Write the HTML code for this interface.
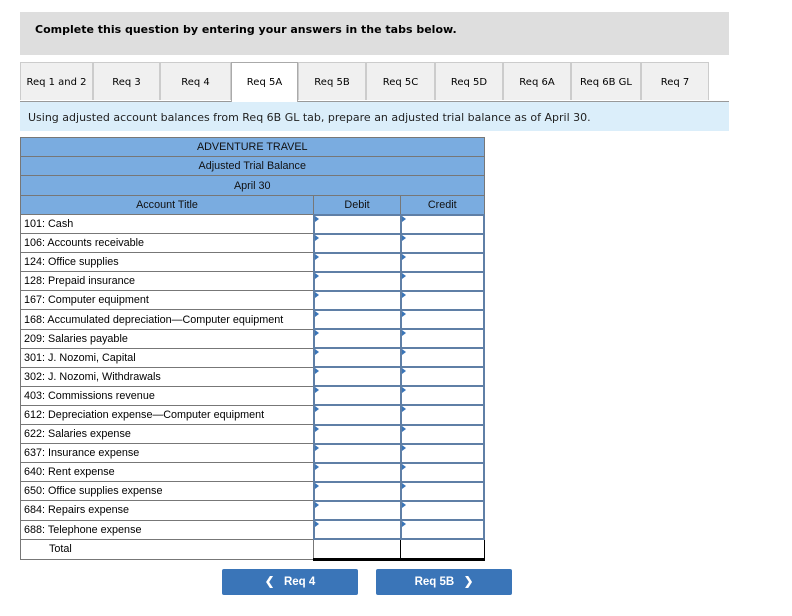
<!DOCTYPE html>
<html><head><style>
body{margin:0;width:792px;height:616px;background:#fff;font-family:"Liberation Sans",Verdana,sans-serif;position:relative;overflow:hidden}
.top{position:absolute;left:20px;top:12px;width:709px;height:43px;background:#dedede}
.top b{position:absolute;left:15px;top:11px;font-family:"DejaVu Sans",sans-serif;font-size:11px}
.tabs{position:absolute;left:20px;top:62px;height:39px;width:709px;border-bottom:1px solid #999}
.tab{position:absolute;top:0;height:38px;background:#f0f0f0;border:1px solid #ccc;border-bottom:none;box-sizing:border-box;font-family:"DejaVu Sans",sans-serif;font-size:10px;text-align:center;line-height:40px}
.tab.a{background:#fff;height:40px;border-color:#aaa}
.inst{position:absolute;left:20px;top:102px;width:709px;height:29px;background:#dbeefa;font-family:"DejaVu Sans",sans-serif;font-size:11px;line-height:31px;text-indent:8px;color:#222}
table{position:absolute;left:20px;top:137px;border-collapse:collapse;font-size:10.8px;width:465px}
td{border:1px solid #777;height:19px;padding:0;box-sizing:border-box}
.h td{background:#7aace0;text-align:center;color:#111}
.r td{height:19.1px}
.r td:first-child{padding-left:3px}
.in{border:2px solid #5f7fa6!important;position:relative}
.in:before{content:"";position:absolute;left:0;top:0;border-left:4px solid #3a75b8;border-top:3px solid transparent;border-bottom:3px solid transparent}
.btn{position:absolute;top:569px;height:26px;width:136px;background:#3a75b8;color:#fff;font-weight:bold;font-size:11.5px;text-align:center;line-height:26px;border-radius:2px}
</style></head><body>
<div class="top"><b>Complete this question by entering your answers in the tabs below.</b></div>
<div class="tabs">
<div class="tab" style="left:0;width:73px">Req 1 and 2</div>
<div class="tab" style="left:73px;width:67px">Req 3</div>
<div class="tab" style="left:140px;width:71px">Req 4</div>
<div class="tab a" style="left:211px;width:67px">Req 5A</div>
<div class="tab" style="left:278px;width:68px">Req 5B</div>
<div class="tab" style="left:346px;width:69px">Req 5C</div>
<div class="tab" style="left:415px;width:68px">Req 5D</div>
<div class="tab" style="left:483px;width:68px">Req 6A</div>
<div class="tab" style="left:551px;width:70px">Req 6B GL</div>
<div class="tab" style="left:621px;width:68px">Req 7</div>
</div>
<div class="inst">Using adjusted account balances from Req 6B GL tab, prepare an adjusted trial balance as of April 30.</div>
<table>
<tr class="h"><td colspan="3" style="height:19px">ADVENTURE TRAVEL</td></tr>
<tr class="h"><td colspan="3" style="height:19px">Adjusted Trial Balance</td></tr>
<tr class="h"><td colspan="3" style="height:20px">April 30</td></tr>
<tr class="h"><td style="width:293px;height:19px">Account Title</td><td style="width:87px">Debit</td><td>Credit</td></tr>
<tr class="r"><td>101: Cash</td><td class="in"></td><td class="in"></td></tr>
<tr class="r"><td>106: Accounts receivable</td><td class="in"></td><td class="in"></td></tr>
<tr class="r"><td>124: Office supplies</td><td class="in"></td><td class="in"></td></tr>
<tr class="r"><td>128: Prepaid insurance</td><td class="in"></td><td class="in"></td></tr>
<tr class="r"><td>167: Computer equipment</td><td class="in"></td><td class="in"></td></tr>
<tr class="r"><td>168: Accumulated depreciation—Computer equipment</td><td class="in"></td><td class="in"></td></tr>
<tr class="r"><td>209: Salaries payable</td><td class="in"></td><td class="in"></td></tr>
<tr class="r"><td>301: J. Nozomi, Capital</td><td class="in"></td><td class="in"></td></tr>
<tr class="r"><td>302: J. Nozomi, Withdrawals</td><td class="in"></td><td class="in"></td></tr>
<tr class="r"><td>403: Commissions revenue</td><td class="in"></td><td class="in"></td></tr>
<tr class="r"><td>612: Depreciation expense—Computer equipment</td><td class="in"></td><td class="in"></td></tr>
<tr class="r"><td>622: Salaries expense</td><td class="in"></td><td class="in"></td></tr>
<tr class="r"><td>637: Insurance expense</td><td class="in"></td><td class="in"></td></tr>
<tr class="r"><td>640: Rent expense</td><td class="in"></td><td class="in"></td></tr>
<tr class="r"><td>650: Office supplies expense</td><td class="in"></td><td class="in"></td></tr>
<tr class="r"><td>684: Repairs expense</td><td class="in"></td><td class="in"></td></tr>
<tr class="r"><td>688: Telephone expense</td><td class="in"></td><td class="in"></td></tr>
<tr><td style="padding-left:28px;height:20px">Total</td><td style="border:1px solid #000;border-bottom:3px solid #000"></td><td style="border:1px solid #000;border-bottom:3px solid #000"></td></tr>
</table>
<div class="btn" style="left:222px">&#10094;&nbsp;&nbsp;&nbsp;Req 4</div>
<div class="btn" style="left:376px">Req 5B&nbsp;&nbsp;&nbsp;&#10095;</div>
</body></html>
